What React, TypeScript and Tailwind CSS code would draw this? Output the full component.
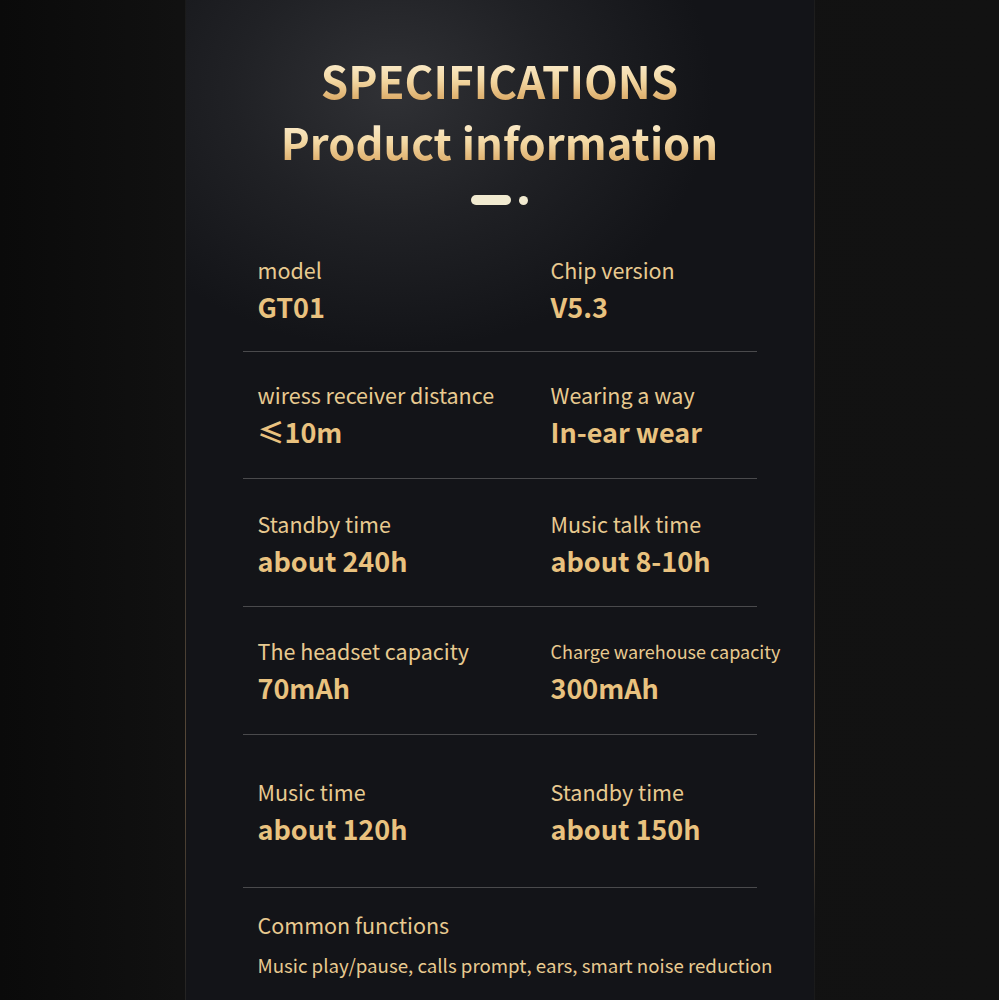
const first = { a: "model", av: "GT01", b: "Chip version", bv: "V5.3" };

const rows = [
  { a: "wiress receiver distance", av: "≤10m", b: "Wearing a way", bv: "In-ear wear", pt: "pt-[29px]", h: "h-[127px]", small: false },
  { a: "Standby time", av: "about 240h", b: "Music talk time", bv: "about 8-10h", pt: "pt-[31px]", h: "h-[128px]", small: false },
  { a: "The headset capacity", av: "70mAh", b: "Charge warehouse capacity", bv: "300mAh", pt: "pt-[30px]", h: "h-[128px]", small: true },
  { a: "Music time", av: "about 120h", b: "Standby time", bv: "about 150h", pt: "pt-[43px]", h: "h-[153px]", small: false },
];

const gold = "bg-gradient-to-b from-[#fff8e6] via-[#f3d8a3] to-[#d09547] bg-clip-text text-transparent";

function Cell({ label, value, small }: { label: string; value: string; small?: boolean }) {
  return (
    <div>
      <div
        className={
          small
            ? "whitespace-nowrap text-[18px] leading-[28px] text-[#e8ca90]"
            : "whitespace-nowrap text-[21.5px] leading-[28px] text-[#e8ca90]"
        }
      >
        {label}
      </div>
      <div className="mt-[6px] whitespace-nowrap text-[27px] font-bold leading-[34px] text-[#e9c27f]">{value}</div>
    </div>
  );
}

export default function App() {
  return (
    <div
      className="flex h-[1000px] w-[999px] justify-center overflow-hidden bg-[linear-gradient(90deg,#0a0a0a_0%,#111111_18%,#121212_100%)]"
      style={{ fontFamily: '"Noto Sans CJK SC", "Noto Sans", sans-serif' }}
    >
      <div className="relative w-[630px] bg-[#131418] bg-[radial-gradient(ellipse_320px_260px_at_33%_9%,#303135_0%,#202125_50%,transparent_100%)]">
        <span className="absolute left-0 top-0 h-full w-px bg-[linear-gradient(180deg,#1a1a1a_0%,#2a2a2a_40%,#5a4a38_78%,#222_100%)]" />
        <span className="absolute right-0 top-0 h-full w-px bg-[linear-gradient(180deg,#1c1c1c_0%,#3a3128_25%,#1e1e1e_50%,#6a5640_80%,#1e1e1e_92%,#1a1a1a_100%)]" />
        <div className="flex h-[352px] flex-col">
          <div className="flex flex-col items-center pt-[50px]">
            <h1 className={`text-[44px] font-bold leading-[60px] ${gold}`}>SPECIFICATIONS</h1>
            <h2 className={`text-[43.5px] font-bold leading-[64px] ${gold}`}>Product information</h2>
            <div className="mt-[21px] flex items-center gap-[8px]">
              <span className="h-[10px] w-[40px] rounded-full bg-[#f1ead0]" />
              <span className="h-[9px] w-[9px] rounded-full bg-[#f1ead0]" />
            </div>
          </div>
          <div className="mx-[58px] mt-auto border-b border-[#4a4a4c]">
            <div className="grid grid-cols-[293px_1fr] pb-[27px] pl-[15px]">
              <Cell label={first.a} value={first.av} />
              <Cell label={first.b} value={first.bv} />
            </div>
          </div>
        </div>
        {rows.map((r) => (
          <div key={r.a} className={`mx-[58px] border-b border-[#4a4a4c] ${r.h} ${r.pt}`}>
            <div className="grid grid-cols-[293px_1fr] pl-[15px]">
              <Cell label={r.a} value={r.av} />
              <Cell label={r.b} value={r.bv} small={r.small} />
            </div>
          </div>
        ))}
        <div className="mx-[58px] pl-[15px] pt-[23px]">
          <div className="text-[21.5px] leading-[28px] text-[#e8ca90]">Common functions</div>
          <div className="mt-[12px] whitespace-nowrap text-[18.7px] leading-[28px] text-[#e8ca90]">
            Music play/pause, calls prompt, ears, smart noise reduction
          </div>
        </div>
      </div>
    </div>
  );
}
